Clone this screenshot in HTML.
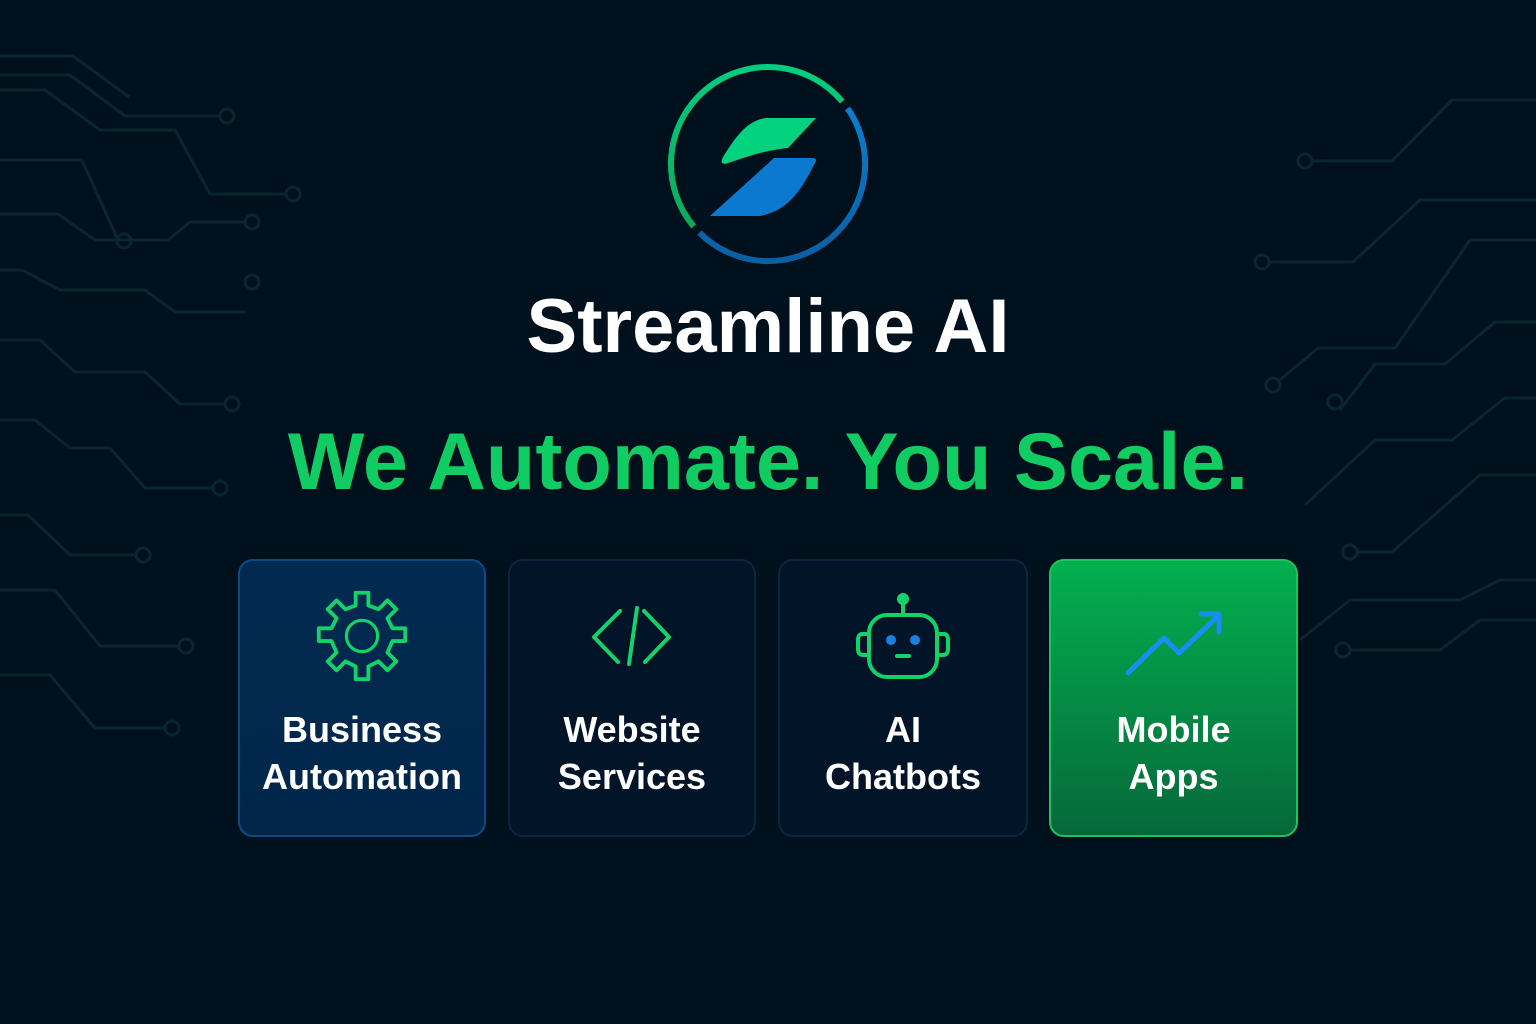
<!DOCTYPE html>
<html><head><meta charset="utf-8"><style>
html,body{margin:0;padding:0;width:1536px;height:1024px;overflow:hidden;background:#01101d;font-family:"Liberation Sans",sans-serif}
.bg{position:absolute;left:0;top:0}
.title{position:absolute;left:0;width:1536px;top:283px;text-align:center;color:#fff;font-size:76px;font-weight:bold;letter-spacing:0px}
.tag{position:absolute;left:0;width:1536px;top:416px;text-align:center;color:#10cc63;font-size:81px;font-weight:bold;letter-spacing:0px}
.card{position:absolute;top:559px;height:278px;border-radius:15px;box-sizing:border-box;border:2px solid #0d2440;background:#021428;color:#fff;font-size:36px;font-weight:bold;text-align:center;line-height:47px}
.card .t{position:absolute;left:0;right:0;top:145px}
.card svg{position:absolute;left:50%;top:30px;transform:translateX(-50%)}
</style></head><body>
<svg class="bg" width="1536" height="1024" fill="none" stroke="#0a2530" stroke-width="3">
<path d="M0 56H73L129 97"/>
<path d="M0 75H70L125 116H220"/><circle cx="227" cy="116" r="7"/>
<path d="M0 90H45L100 130H175L210 194H286"/><circle cx="293" cy="194" r="7"/>
<path d="M0 160H82L117 238"/><circle cx="124" cy="241" r="7"/>
<path d="M0 214H58L95 240H168L190 222H245"/><circle cx="252" cy="222" r="7"/>
<path d="M0 270H22L60 290H145L175 312H245"/><circle cx="252" cy="282" r="7"/>
<path d="M0 340H40L75 372H145L180 404H225"/><circle cx="232" cy="404" r="7"/>
<path d="M0 420H35L70 448H110L145 488H213"/><circle cx="220" cy="488" r="7"/>
<path d="M0 515H28L70 555H136"/><circle cx="143" cy="555" r="7"/>
<path d="M0 590H55L100 646H179"/><circle cx="186" cy="646" r="7"/>
<path d="M0 675H50L95 728H165"/><circle cx="172" cy="728" r="7"/>
<path d="M1312 161H1392L1452 100H1536"/><circle cx="1305" cy="161" r="7"/>
<path d="M1269 262H1353L1420 200H1536"/><circle cx="1262" cy="262" r="7"/>
<path d="M1280 380L1318 348H1395L1470 240H1536"/><circle cx="1273" cy="385" r="7"/>
<path d="M1340 410L1375 364H1445L1495 322H1536"/><circle cx="1335" cy="402" r="7"/>
<path d="M1305 505L1375 440H1452L1505 398H1536"/>
<path d="M1357 552H1392L1480 475H1536"/><circle cx="1350" cy="552" r="7"/>
<path d="M1300 640L1350 600H1460L1500 580H1536"/>
<path d="M1350 650H1440L1480 620H1536"/><circle cx="1343" cy="650" r="7"/>
</svg>

<svg style="position:absolute;left:648px;top:44px;overflow:visible" width="240" height="240" viewBox="-12 -12 240 240">
<defs><linearGradient id="gr" x1="0" y1="0" x2="0" y2="1"><stop offset="0" stop-color="#00cf7e"/><stop offset="1" stop-color="#0ea85c"/></linearGradient>
<linearGradient id="bl" x1="0" y1="0" x2="0" y2="1"><stop offset="0" stop-color="#0a7ed0"/><stop offset="1" stop-color="#0b5fa3"/></linearGradient></defs>
<path d="M182.3 45.6 A97 97 0 1 0 33.7 170.4" stroke="url(#gr)" stroke-width="6" fill="none"/>
<path d="M187.5 52.4 A97 97 0 0 1 39.4 176.6" stroke="url(#bl)" stroke-width="6" fill="none"/>
<path d="M106 62 H156 L128 92 C100 95 84 102 68 107 C62 109 60 107 63 101 C76 80 88 64 106 62Z" fill="#03d27f"/>
<path d="M114 102 H153 C156 102 157 104 155 107 C143 130 131 154 100 160 H50 Z" fill="#0b79cf"/>
</svg>

<div class="title">Streamline AI</div>
<div class="tag">We Automate. You Scale.</div>

<div class="card" style="left:238px;width:248px;border-color:#0b4b85;background:linear-gradient(#022a50,#01264a)">
<svg width="100" height="100" viewBox="0 0 96 96" fill="none" stroke="#14d26a" stroke-width="3" stroke-linejoin="round" style="top:26px">
<path d="M42 8H52V18L60 21L67 14L74 21L67 28L71 36H81V46H71L67 55L74 62L67 69L60 62L52 66V76H42V66L34 62L27 69L20 62L27 55L23 46H13V36H23L27 28L20 21L27 14L34 21L42 18Z" transform="translate(48 47) scale(1.22) translate(-47 -42)"/>
<circle cx="48" cy="47" r="15"/></svg>
<div class="t">Business<br>Automation</div></div>

<div class="card" style="left:508px;width:248px">
<svg width="96" height="96" viewBox="0 0 96 96" fill="none" stroke="#14d26a" stroke-width="4" stroke-linecap="round" stroke-linejoin="round">
<path d="M36 20L10 46L34 71"/><path d="M60 20L85 46L61 71"/><path d="M53 17L45 73"/></svg>
<div class="t">Website<br>Services</div></div>

<div class="card" style="left:778px;width:250px">
<svg width="110" height="96" viewBox="0 0 110 96" fill="none" stroke="#14d26a" stroke-width="4">
<circle cx="55" cy="8" r="4" fill="#14d26a"/><path d="M55 12V24"/>
<rect x="21" y="24" width="68" height="62" rx="18"/>
<path d="M21 43H14C11 43 10 46 10 49V58C10 62 12 64 15 64H21M89 43H96C99 43 100 46 100 49V58C100 62 98 64 95 64H89"/>
<circle cx="43" cy="49" r="5" fill="#1a80e0" stroke="none"/><circle cx="67" cy="49" r="5" fill="#1a80e0" stroke="none"/>
<path d="M49 65H61" stroke-linecap="round"/></svg>
<div class="t">AI<br>Chatbots</div></div>

<div class="card" style="left:1049px;width:249px;border-color:#19c55c;background:linear-gradient(#03b04f,#06683a)">
<svg width="110" height="96" viewBox="0 0 110 96" fill="none" stroke="#1a8ef0" stroke-width="5" stroke-linecap="round" stroke-linejoin="round">
<path d="M9 82L45 47L60 62L98 26"/><path d="M82 23H100V41"/></svg>
<div class="t">Mobile<br>Apps</div></div>
</body></html>
